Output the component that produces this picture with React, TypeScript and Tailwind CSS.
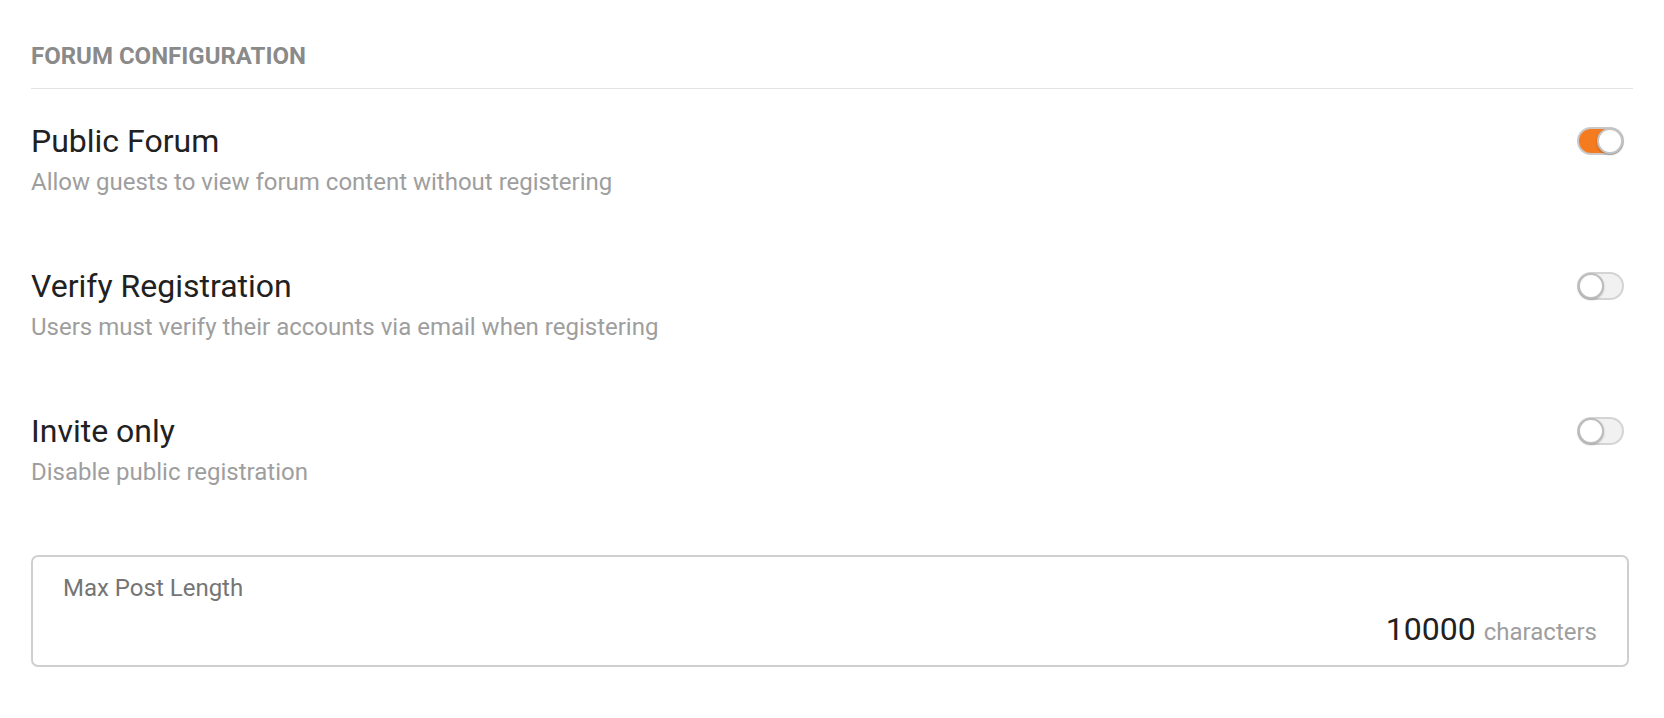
import { useState } from "react";

const SETTINGS = [
  { key: "public", title: "Public Forum", desc: "Allow guests to view forum content without registering", on: true },
  { key: "verify", title: "Verify Registration", desc: "Users must verify their accounts via email when registering", on: false },
  { key: "invite", title: "Invite only", desc: "Disable public registration", on: false },
];

function Toggle({ on, onChange }: { on: boolean; onChange: () => void }) {
  return (
    <button
      type="button"
      role="switch"
      aria-checked={on}
      onClick={onChange}
      className={`relative h-[28px] w-[47px] shrink-0 rounded-full border-2 transition-colors ${
        on ? "border-[#c9c9c9] bg-[#f47b20]" : "border-[#d4d4d4] bg-[#f1f1f1]"
      }`}
    >
      <span
        className={`absolute top-[-1px] size-[26px] rounded-full border-2 bg-white shadow-[0_1px_2px_rgba(0,0,0,0.25)] ${
          on ? "right-[-1px] border-[#c4c4c4]" : "left-[-1px] border-[#bdbdbd]"
        }`}
      />
    </button>
  );
}

export default function App() {
  const [state, setState] = useState<Record<string, boolean>>(
    Object.fromEntries(SETTINGS.map((s) => [s.key, s.on]))
  );

  return (
    <div className="min-h-screen bg-white px-[31px] font-['Roboto',sans-serif]">
      <h2 className="border-b border-[#e3e3e3] pb-[19px] pt-[43px] text-[24px] leading-[26px] font-bold text-[#8a8a8a]">
        FORUM CONFIGURATION
      </h2>

      <div className="flex flex-col gap-[72px] pt-[34px]">
        {SETTINGS.map((s) => (
          <div key={s.key} className="flex items-start justify-between">
            <div>
              <p className="text-[32px] leading-[36px] text-[#212121]">{s.title}</p>
              <p className="mt-[9px] text-[24px] leading-[28px] text-[#9e9e9e]">{s.desc}</p>
            </div>
            <div className="mr-[9px] mt-[4px]">
              <Toggle on={state[s.key]} onChange={() => setState((p) => ({ ...p, [s.key]: !p[s.key] }))} />
            </div>
          </div>
        ))}

        <label className="-mt-[3px] mr-[4px] flex h-[112px] flex-col rounded-[7px] border-2 border-[#cfcfcf] px-[30px] pt-[17px]">
          <span className="text-[24px] leading-[28px] text-[#757575]">Max Post Length</span>
          <span className="mt-auto mb-[18px] flex items-baseline justify-end gap-[8px]">
            <span className="text-[32px] leading-[36px] text-[#212121]">10000</span>
            <span className="text-[24px] leading-[28px] text-[#9e9e9e]">characters</span>
          </span>
        </label>
      </div>
    </div>
  );
}
